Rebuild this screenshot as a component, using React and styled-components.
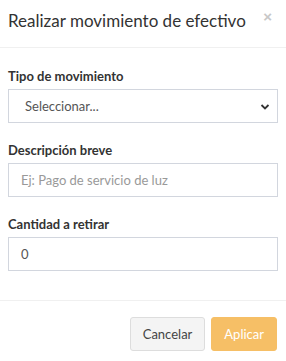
import React from 'react';
import styled, { createGlobalStyle } from 'styled-components';

const GlobalStyle = createGlobalStyle`
  * { box-sizing: border-box; }
  html, body { margin: 0; padding: 0; background: #fff; }
  body {
    font-family: Lato, "Liberation Sans", sans-serif;
    color: #333;
    font-size: 13px;
  }
`;

const Modal = styled.div`
  width: 286px;
  height: 361px;
  background: #fff;
  display: flex;
  flex-direction: column;
`;

const Header = styled.div`
  height: 48px;
  padding: 10px 8px 0 8px;
  border-bottom: 1px solid #f0f0f0;
  display: flex;
  align-items: flex-start;
  justify-content: space-between;
`;

const Title = styled.h4`
  margin: 0;
  font-size: 17px;
  font-weight: 400;
  line-height: 22px;
  color: #333;
`;

const Close = styled.button`
  border: 0;
  background: none;
  padding: 0;
  margin: 0 6px 0 0;
  font-size: 15px;
  line-height: 14px;
  font-weight: 700;
  color: #c8c8c8;
  font-family: "Liberation Sans", sans-serif;
`;

const Body = styled.div`
  padding: 20px 8px 0 8px;
  display: flex;
  flex-direction: column;
  gap: 19px;
  height: 253px;
  border-bottom: 1px solid #f0f0f0;
`;

const Group = styled.div`
  display: flex;
  flex-direction: column;
  gap: 5px;
`;

const Label = styled.label`
  font-weight: 700;
  font-size: 13px;
  line-height: 16px;
  color: #333;
`;

const Field = styled.div`
  position: relative;
  height: 34px;
  border: 1px solid #d2d6de;
  display: flex;
  align-items: center;
  padding: 0 12px;
  font-size: 13px;
  color: ${p => (p.$placeholder ? '#999' : '#555')};
`;

const SelectText = styled.span`
  padding-left: 4px;
`;

const Chevron = styled.svg`
  position: absolute;
  right: 7px;
  top: 13px;
`;

const Footer = styled.div`
  flex: 1;
  display: flex;
  justify-content: flex-end;
  align-items: flex-start;
  padding: 16px 9px 0 0;
  gap: 6px;
`;

const Button = styled.button`
  height: 34px;
  padding: 0 12px;
  font-family: inherit;
  font-size: 13px;
  border-radius: 3px;
  border: 1px solid ${p => (p.$primary ? '#f6bf66' : '#dddddd')};
  background: ${p => (p.$primary ? '#f6bf66' : '#f4f4f4')};
  color: ${p => (p.$primary ? '#fff' : '#444')};
`;

export default function App() {
  return (
    <>
      <GlobalStyle />
      <Modal>
        <Header>
          <Title>Realizar movimiento de efectivo</Title>
          <Close>×</Close>
        </Header>
        <Body>
          <Group>
            <Label>Tipo de movimiento</Label>
            <Field>
              <SelectText>Seleccionar...</SelectText>
              <Chevron width="10" height="8" viewBox="0 0 10 8">
                <path d="M1.5 2 L5 5.5 L8.5 2" fill="none" stroke="#333" strokeWidth="1.8" />
              </Chevron>
            </Field>
          </Group>
          <Group>
            <Label>Descripción breve</Label>
            <Field $placeholder>Ej: Pago de servicio de luz</Field>
          </Group>
          <Group>
            <Label>Cantidad a retirar</Label>
            <Field>0</Field>
          </Group>
        </Body>
        <Footer>
          <Button>Cancelar</Button>
          <Button $primary>Aplicar</Button>
        </Footer>
      </Modal>
    </>
  );
}
